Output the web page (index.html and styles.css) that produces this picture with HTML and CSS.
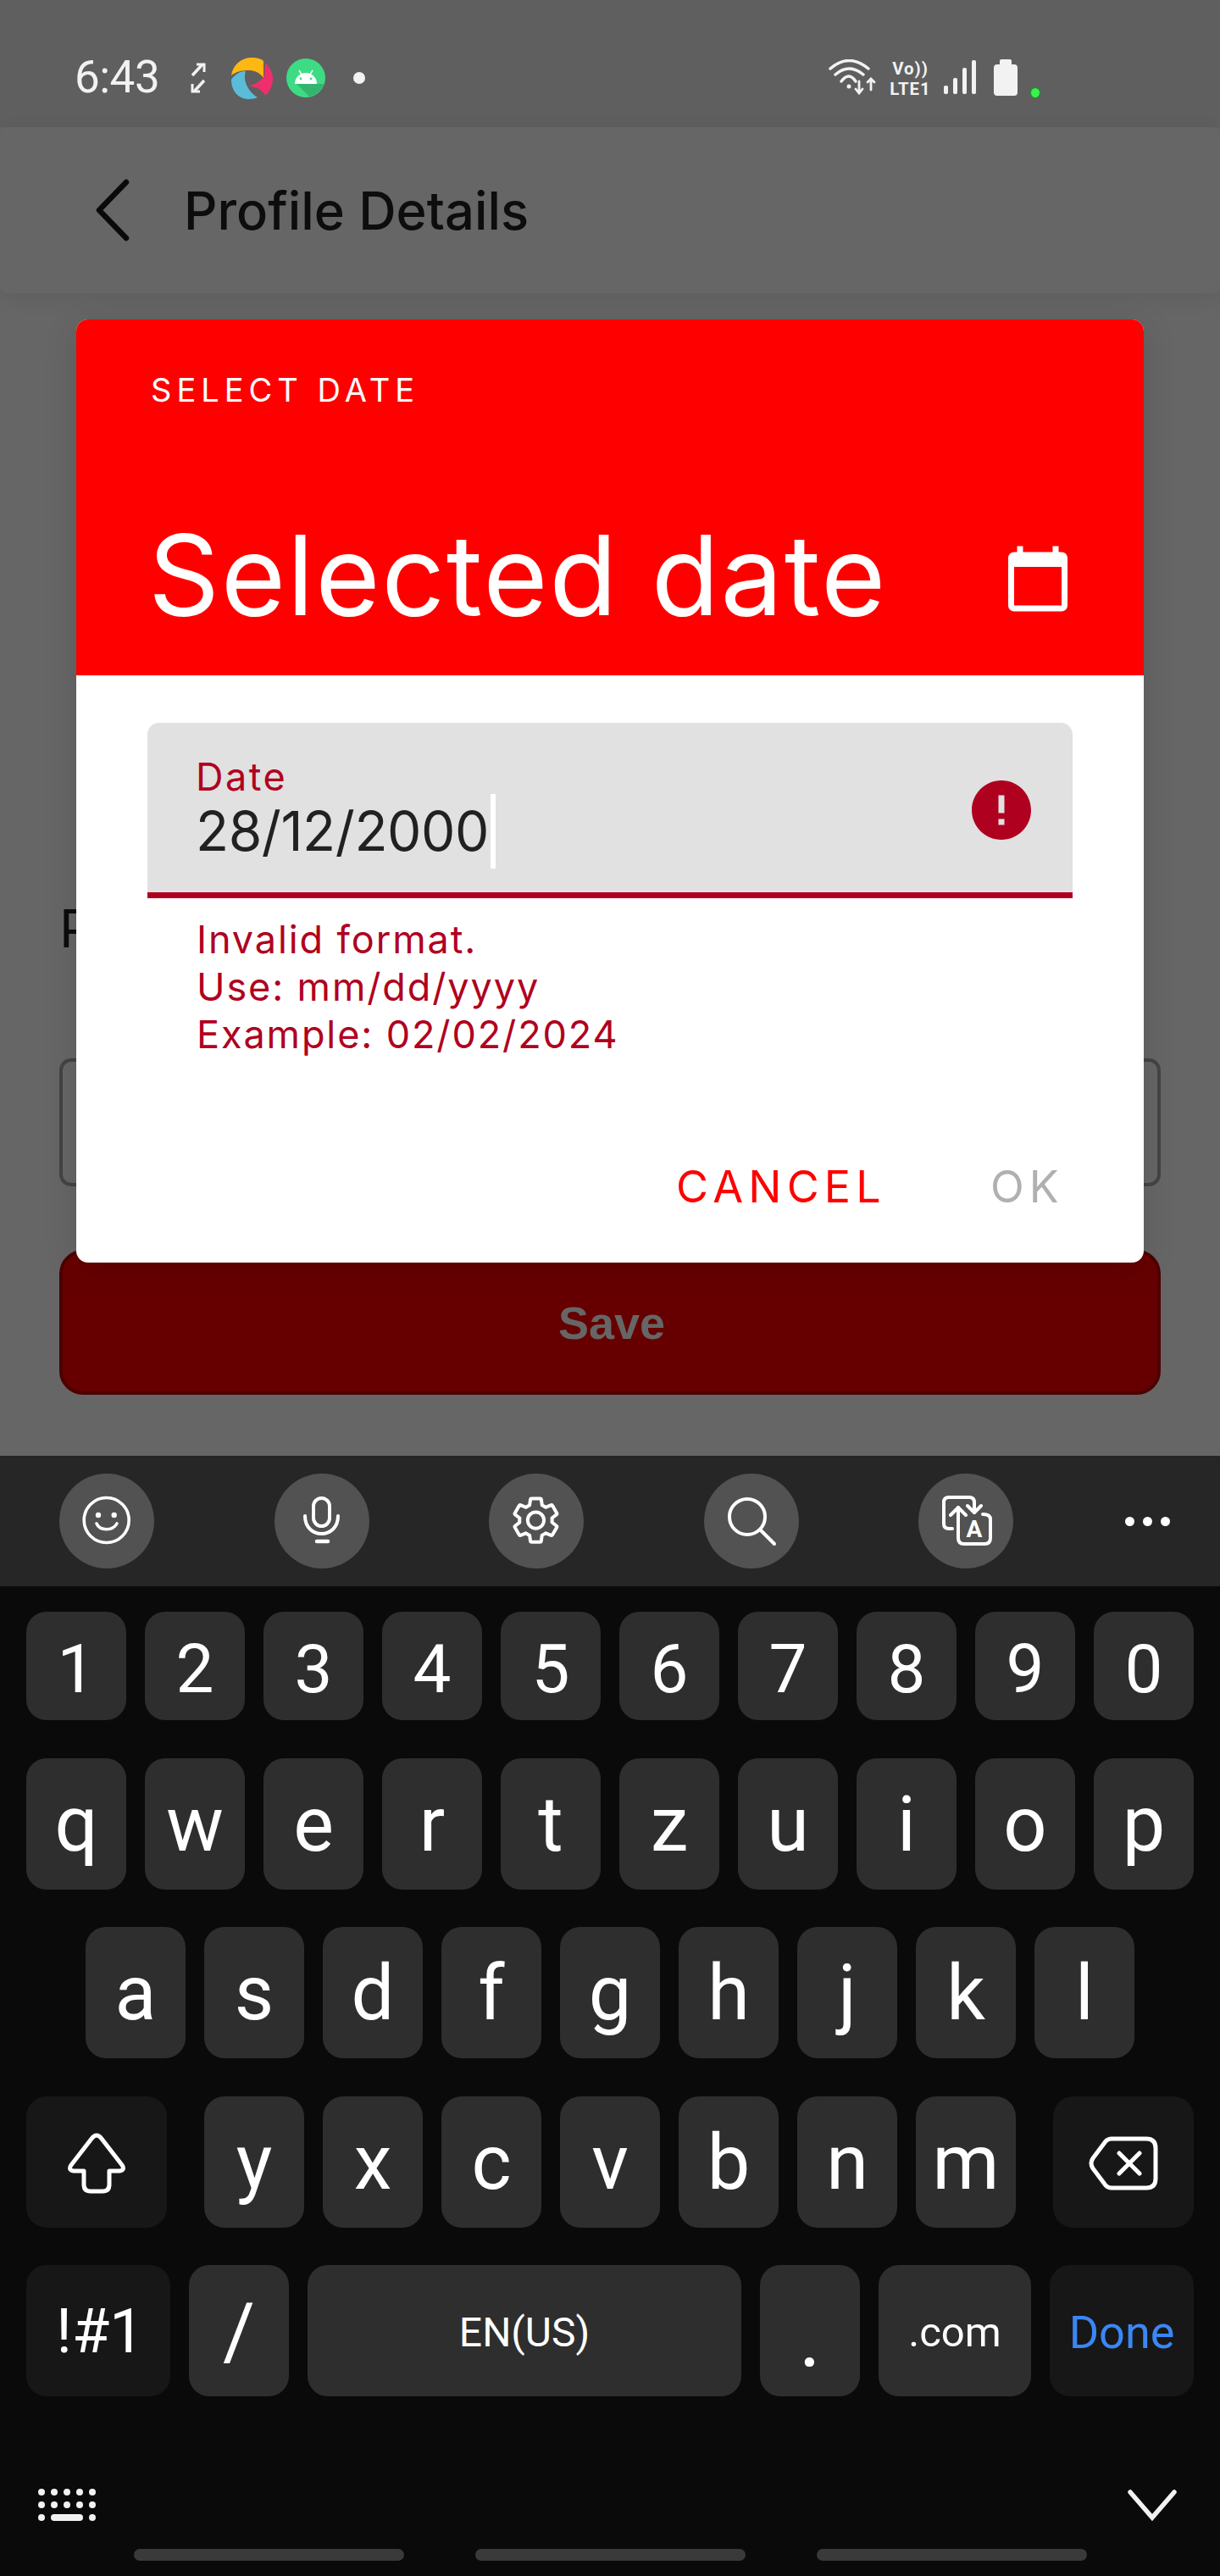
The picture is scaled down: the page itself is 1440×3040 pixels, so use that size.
FILE: index.html
```html
<!DOCTYPE html>
<html lang="en">

<head>
    <meta charset="UTF-8">
    <meta name="viewport" content="width=device-width, initial-scale=1.0">
    <title>Profile Details</title>
    <link rel="stylesheet" href="styles.css">
</head>

<body>

    <div class="app">
        <div class="status-bar">
            <span class="time">6:43</span>
            <svg class="sync-icon" width="18" height="36" viewBox="0 0 18 36" fill="none" stroke="#f2f2f2">
                <path d="M2 15 L14 2" stroke-width="3.5" />
                <path d="M7 2 H16 V11" stroke-width="3" />
                <path d="M16 21 L4 34" stroke-width="3.5" />
                <path d="M11 34 H2 V25" stroke-width="3" />
            </svg>
            <svg class="swirl-icon" width="49" height="49" viewBox="0 0 49 49">
                <path d="M0 21 C2 8 12 0 24 0 C30 0 35 1 38 4 L38 24 C33 17 27 15 20 15 C12 15 5 17 0 21Z" fill="#fdb813" />
                <path d="M40 6 C46 12 49 18 49 25 C49 33 45 41 40 45 C38 39 31 35 20 33 C29 32 35 27 39 22Z" fill="#ef2f6c" />
                <path d="M0 26 C4 20 10 16 17 16 C14 24 17 38 31 47 C28 48 25 49 21 49 C8 49 0 39 0 26Z" fill="#5bbcd8" />
            </svg>
            <svg class="android-icon" width="46" height="46" viewBox="0 0 46 46">
                <circle cx="23" cy="23" r="23" fill="#3ddc84" />
                <path d="M12 30 L27 45 A23 23 0 0 0 45 30Z" fill="#34b56f" />
                <path d="M10 30 A13 13 0 0 1 36 30Z" fill="#fff" />
                <path d="M15 14 L18 19 M31 14 L28 19" stroke="#fff" stroke-width="1.5" />
                <circle cx="17" cy="24" r="1.4" fill="#3ddc84" />
                <circle cx="29" cy="24" r="1.4" fill="#3ddc84" />
            </svg>
            <span class="notif-dot"></span>

            <div class="status-right">
                <svg class="wifi-icon" width="56" height="42" viewBox="0 0 56 42" fill="none" stroke="#f2f2f2" stroke-linecap="round">
                    <path d="M2 11 Q24 -8 47 11" stroke-width="3.5" />
                    <path d="M8 18 Q24 4 41 18" stroke-width="3.5" />
                    <path d="M15 26 Q24 14 32 26" stroke-width="3.5" />
                    <circle cx="24" cy="32" r="2.5" fill="#f2f2f2" stroke="none" />
                    <path d="M36 26 V40 M32 35 L36 40 L40 35" stroke-width="2.8" />
                    <path d="M50 36 V23 M46 27 L50 23 L54 27" stroke-width="2.8" />
                </svg>
                <div class="volte">Vo))<br>LTE1</div>
                <div class="signal">
                    <span class="bar bar-1"></span>
                    <span class="bar bar-2"></span>
                    <span class="bar bar-3"></span>
                    <span class="bar bar-4"></span>
                </div>
                <div class="battery"><span class="battery-cap"></span><span class="battery-body"></span></div>
                <span class="green-dot"></span>
            </div>
        </div>

        <div class="app-bar">
            <svg class="back-icon" width="44" height="74" viewBox="0 0 44 74" fill="none" stroke="#0a0a0a" stroke-width="6.5" stroke-linecap="round" stroke-linejoin="round">
                <path d="M38 4 L6 37 L38 70" />
            </svg>
            <h1>Profile Details</h1>
        </div>

        <div class="form">
            <div class="form-label">P</div>
            <div class="form-input"></div>
            <button class="save-btn" type="button">Save</button>
        </div>

        <div class="dialog">
            <div class="dialog-head">
                <div class="dialog-over">SELECT DATE</div>
                <div class="dialog-title-row">
                    <span class="dialog-title">Selected date</span>
                    <svg class="calendar-icon" width="84" height="84" viewBox="0 0 24 24" fill="#fff">
                        <path d="M20 3h-1V1h-2v2H7V1H5v2H4c-1.1 0-2 .9-2 2v16c0 1.1.9 2 2 2h16c1.1 0 2-.9 2-2V5c0-1.1-.9-2-2-2zm0 18H4V8h16v13z" />
                    </svg>
                </div>
            </div>

            <div class="dialog-body">
                <div class="date-field">
                    <div class="date-text">
                        <label class="date-label">Date</label>
                        <div class="date-value">28/12/2000<span class="caret"></span></div>
                    </div>
                    <svg class="error-icon" width="84" height="84" viewBox="0 0 24 24" fill="#b00020">
                        <path d="M12 2C6.48 2 2 6.48 2 12s4.48 10 10 10 10-4.48 10-10S17.52 2 12 2zm1 15h-2v-2h2v2zm0-4h-2V7h2v6z" />
                    </svg>
                </div>
                <div class="date-error">Invalid format.<br>Use: mm/dd/yyyy<br>Example: 02/02/2024</div>
            </div>

            <div class="dialog-actions">
                <span class="action action-cancel">CANCEL</span>
                <span class="action action-ok">OK</span>
            </div>
        </div>
    </div>

    <div class="keyboard">
        <div class="toolbar">
            <div class="tool">
                <svg width="112" height="112" viewBox="0 0 112 112" fill="none" stroke="#fff" stroke-width="3.6" stroke-linecap="round">
                    <circle cx="55.7" cy="55" r="26.5" />
                    <circle cx="46" cy="49" r="3.2" fill="#fff" stroke="none" />
                    <circle cx="64.7" cy="49" r="3.2" fill="#fff" stroke="none" />
                    <path d="M44 59 C48 68 63 68 68 59" />
                </svg>
            </div>
            <div class="tool">
                <svg width="112" height="112" viewBox="0 0 112 112" fill="none" stroke="#fff" stroke-width="4" stroke-linecap="round">
                    <rect x="46" y="29" width="19" height="33" rx="9.5" />
                    <path d="M36 50 C36 78 75 78 75 50" />
                    <path d="M50 80 H63" stroke-width="4.5" />
                </svg>
            </div>
            <div class="tool">
                <svg width="112" height="112" viewBox="0 0 112 112" fill="none" stroke="#fff" stroke-width="1.5" stroke-linejoin="round">
                    <g transform="translate(23.4 23) scale(2.67)">
                        <path d="M19.14 12.94c.04-.3.06-.61.06-.94 0-.32-.02-.64-.07-.94l2.03-1.58c.18-.14.23-.41.12-.61l-1.92-3.32c-.12-.22-.37-.29-.59-.22l-2.39.96c-.5-.38-1.03-.7-1.62-.94l-.36-2.54c-.04-.24-.24-.41-.48-.41h-3.84c-.24 0-.43.17-.47.41l-.36 2.54c-.59.24-1.13.57-1.62.94l-2.39-.96c-.22-.08-.47 0-.59.22L2.74 8.87c-.12.21-.08.47.12.61l2.03 1.58c-.05.3-.09.63-.09.94s.02.64.07.94l-2.03 1.58c-.18.14-.23.41-.12.61l1.92 3.32c.12.22.37.29.59.22l2.39-.96c.5.38 1.03.7 1.62.94l.36 2.54c.05.24.24.41.48.41h3.84c.24 0 .44-.17.47-.41l.36-2.54c.59-.24 1.13-.56 1.62-.94l2.39.96c.22.08.47 0 .59-.22l1.92-3.32c.12-.22.07-.47-.12-.61l-2.01-1.58zM12 15.6c-1.98 0-3.6-1.62-3.6-3.6s1.62-3.6 3.6-3.6 3.6 1.62 3.6 3.6-1.62 3.6-3.6 3.6z" />
                    </g>
                </svg>
            </div>
            <div class="tool">
                <svg width="112" height="112" viewBox="0 0 112 112" fill="none" stroke="#fff" stroke-width="4" stroke-linecap="round">
                    <circle cx="51" cy="51" r="21" />
                    <path d="M66 66 L83 83" />
                </svg>
            </div>
            <div class="tool">
                <svg width="112" height="112" viewBox="0 0 112 112" fill="none" stroke="#fff" stroke-width="4" stroke-linecap="round" stroke-linejoin="round">
                    <g transform="translate(28 26)">
                        <path d="M12 39 H8 Q2 39 2 33 V8 Q2 2 8 2 H32 Q38 2 38 8 V20" />
                        <path d="M30 12 L38 20 L46 12" />
                        <path d="M10 23 L19 14 L28 23" />
                        <path d="M19 14 V50 Q19 57 26 57 H50 Q57 57 57 50 V28 Q57 22 48 22" />
                        <text x="38" y="49" class="translate-a">A</text>
                    </g>
                </svg>
            </div>
            <div class="more-dots"><span></span><span></span><span></span></div>
        </div>

        <div class="keys">
            <div class="row row-num">
                <div class="key">1</div>
                <div class="key">2</div>
                <div class="key">3</div>
                <div class="key">4</div>
                <div class="key">5</div>
                <div class="key">6</div>
                <div class="key">7</div>
                <div class="key">8</div>
                <div class="key">9</div>
                <div class="key">0</div>
            </div>
            <div class="row row-45">
                <div class="key">q</div>
                <div class="key">w</div>
                <div class="key">e</div>
                <div class="key">r</div>
                <div class="key">t</div>
                <div class="key">z</div>
                <div class="key">u</div>
                <div class="key">i</div>
                <div class="key">o</div>
                <div class="key">p</div>
            </div>
            <div class="row">
                <div class="key">a</div>
                <div class="key">s</div>
                <div class="key">d</div>
                <div class="key">f</div>
                <div class="key">g</div>
                <div class="key">h</div>
                <div class="key">j</div>
                <div class="key">k</div>
                <div class="key">l</div>
            </div>
            <div class="row row-45">
                <div class="key key-fn key-shift">
                    <svg width="70" height="72" viewBox="0 0 70 72" fill="none" stroke="#fff" stroke-width="5" stroke-linejoin="round">
                        <path d="M35 3 Q32 3 29 7 L5 38 Q1 44 8 45 H20 V61 Q20 69 28 69 H42 Q50 69 50 61 V45 H62 Q69 44 65 38 L41 7 Q38 3 35 3Z" />
                    </svg>
                </div>
                <div class="key">y</div>
                <div class="key">x</div>
                <div class="key">c</div>
                <div class="key">v</div>
                <div class="key">b</div>
                <div class="key">n</div>
                <div class="key">m</div>
                <div class="key key-fn key-back">
                    <svg width="82" height="64" viewBox="0 0 82 64" fill="none" stroke="#fff" stroke-width="5" stroke-linecap="round" stroke-linejoin="round">
                        <path d="M27 3 H68 Q79 3 79 14 V50 Q79 61 68 61 H27 Q23 61 20 58 L5 38 Q1 32 5 26 L20 6 Q23 3 27 3Z" />
                        <path d="M36 20 L60 44 M60 20 L36 44" />
                    </svg>
                </div>
            </div>
            <div class="row">
                <div class="key key-fn key-sym">!#1</div>
                <div class="key key-slash">/</div>
                <div class="key key-space">EN(US)</div>
                <div class="key key-dot">.</div>
                <div class="key key-com">.com</div>
                <div class="key key-fn key-done">Done</div>
            </div>
        </div>

        <div class="kb-footer">
            <div class="kb-grid">
                <span></span><span></span><span></span><span></span><span></span>
                <span></span><span></span><span></span><span></span><span></span>
                <span></span><span class="kb-space"></span><span></span>
            </div>
            <svg width="62" height="40" viewBox="0 0 62 40" fill="none" stroke="#f2f2f2" stroke-width="5.5" stroke-linecap="round">
                <path d="M5 5 L31 35 L57 5" />
            </svg>
        </div>

        <div class="home-bars"><span></span><span></span><span></span></div>
    </div>

</body>

</html>
```

FILE: styles.css
```css
body {
    margin: 0;
    width: 1440px;
    height: 3040px;
    overflow: hidden;
    background-color: #666666;
    font-family: Inter, "Liberation Sans", sans-serif;
}

.app {
    position: relative;
    height: 1718px;
    overflow: hidden;
}

/* status bar */
.status-bar {
    height: 150px;
    background-color: #5f5f5f;
    display: flex;
    align-items: center;
    padding: 32px 212px 0 88px;
    box-sizing: border-box;
    color: #f2f2f2;
}

.time {
    font-family: Roboto, sans-serif;
    font-size: 53px;
    letter-spacing: -0.5px;
    width: 137px;
}

.sync-icon {
    margin-right: 30px;
    margin-top: 2px;
}

.swirl-icon {
    margin-right: 16px;
    margin-top: 2px;
}

.android-icon {
    margin-top: 2px;
    margin-right: 33px;
}

.notif-dot {
    width: 14px;
    height: 14px;
    border-radius: 50%;
    background-color: #f2f2f2;
    margin-top: 2px;
}

.status-right {
    margin-left: auto;
    display: flex;
    align-items: center;
}

.wifi-icon {
    margin-right: 15px;
}

.volte {
    width: 51px;
    margin-top: 3px;
    margin-right: 14px;
    text-align: center;
    font-family: Roboto, sans-serif;
    font-size: 20.4px;
    line-height: 24px;
    font-weight: 700;
    letter-spacing: 1px;
}

.signal {
    display: flex;
    align-items: flex-end;
    gap: 6px;
    height: 40px;
    margin-right: 21px;
}

.bar {
    width: 5px;
    background-color: #f2f2f2;
    border-radius: 2px;
}

.bar-1 {
    height: 10px;
}

.bar-2 {
    height: 19px;
}

.bar-3 {
    height: 31px;
}

.bar-4 {
    height: 40px;
}

.battery {
    display: flex;
    flex-direction: column;
    align-items: center;
    margin-right: 15px;
}

.battery-cap {
    width: 14px;
    height: 6px;
    background-color: #f2f2f2;
    border-radius: 2px 2px 0 0;
}

.battery-body {
    width: 28px;
    height: 37px;
    background-color: #f2f2f2;
    border-radius: 4px;
}

.green-dot {
    width: 10px;
    height: 11px;
    border-radius: 50%;
    background-color: #3cf04e;
    border: 1px solid #0b9a1e;
    margin-top: 36px;
}

/* app bar */
.app-bar {
    height: 196px;
    background-color: #666666;
    border-radius: 8px;
    box-shadow: 0px 6px 24px rgba(0, 0, 0, 0.08);
    display: flex;
    align-items: center;
    padding-left: 111px;
    position: relative;
}

.app-bar h1 {
    margin: 0 0 0 62px;
    font-size: 61.5px;
    font-weight: 500;
    color: #0d0d0d;
}

/* form behind the dialog */
.form {
    padding: 0 70px;
}

.form-label {
    margin-top: 710px;
    font-size: 62px;
    line-height: 80px;
    color: #0d0d0d;
}

.form-input {
    margin-top: 113px;
    height: 143px;
    border: 4px solid #444444;
    border-radius: 14px;
}

.save-btn {
    display: block;
    width: 100%;
    height: 171px;
    margin-top: 75px;
    padding-left: 10px;
    background-color: #660000;
    border: 4px solid #4d0000;
    border-radius: 28px;
    font-family: "Liberation Sans", sans-serif;
    font-size: 54px;
    font-weight: bold;
    color: #666666;
}

/* date dialog */
.dialog {
    position: absolute;
    left: 90px;
    top: 377px;
    width: 1260px;
    height: 1113px;
    background-color: #ffffff;
    border-radius: 14px;
    box-shadow: 0px 8px 40px rgba(0, 0, 0, 0.12);
    overflow: hidden;
}

.dialog-head {
    height: 420px;
    background-color: #ff0000;
    color: #ffffff;
    padding-left: 85px;
    padding-right: 83px;
    box-sizing: border-box;
}

.dialog-over {
    padding: 62px 0 0 3px;
    font-size: 38px;
    line-height: 42px;
    letter-spacing: 6px;
}

.dialog-title-row {
    display: flex;
    align-items: center;
    justify-content: space-between;
    margin-top: 123px;
}

.dialog-title {
    font-size: 131px;
    line-height: 150px;
    letter-spacing: 1.7px;
    margin-bottom: 7px;
}

.dialog-body {
    padding: 56px 84px 0;
}

.date-field {
    height: 200px;
    background-color: #e1e1e1;
    border-bottom: 7px solid #b00020;
    border-radius: 14px 14px 0 0;
    display: flex;
    align-items: center;
    justify-content: space-between;
    padding-left: 57px;
    padding-right: 42px;
}

.date-text {
    padding-top: 11px;
}

.date-label {
    display: block;
    font-size: 45px;
    line-height: 50px;
    color: #b00020;
    letter-spacing: 2.5px;
    margin-bottom: -5px;
}

.date-value {
    font-size: 64px;
    line-height: 64px;
    letter-spacing: -0.4px;
    color: #212121;
    display: flex;
    align-items: center;
}

.caret {
    width: 6px;
    height: 88px;
    background-color: #ffffff;
    margin-left: 2px;
}

.error-icon {
    margin-top: 5px;
}

.date-error {
    padding: 21px 0 0 58px;
    font-size: 45px;
    line-height: 56px;
    color: #b00020;
    letter-spacing: 1.9px;
}

.dialog-actions {
    display: flex;
    justify-content: flex-end;
    gap: 123px;
    padding: 122px 94px 0 0;
}

.action {
    font-size: 52px;
    line-height: 60px;
    letter-spacing: 6.2px;
}

.action-cancel {
    color: #ff0000;
}

.action-ok {
    color: #b0b0b0;
}

/* keyboard */
.keyboard {
    height: 1322px;
    background-color: #0a0a0a;
    color: #ffffff;
    font-family: Roboto, sans-serif;
}

.toolbar {
    height: 154px;
    background-color: #262626;
    display: flex;
    align-items: center;
    padding-left: 70px;
    gap: 141.5px;
}

.tool {
    width: 112px;
    height: 112px;
    border-radius: 50%;
    background-color: #525252;
}

.tool svg {
    display: block;
}

.translate-a {
    font-family: Roboto, sans-serif;
    font-size: 28px;
    font-weight: 700;
    fill: #ffffff;
    stroke: none;
    text-anchor: middle;
}

.more-dots {
    margin-left: -10px;
    display: flex;
    gap: 10px;
}

.more-dots span {
    width: 11px;
    height: 11px;
    border-radius: 50%;
    background-color: #ffffff;
}

.keys {
    padding: 30px 31px 0;
}

.row {
    display: flex;
    justify-content: center;
    gap: 22px;
    height: 155px;
    margin-top: 44px;
}

.row-num {
    height: 128px;
    margin-top: 0;
}

.row-45 {
    margin-top: 45px;
}

.key {
    width: 118px;
    box-sizing: border-box;
    padding-top: 2px;
    background-color: #2e2e2e;
    border-radius: 24px;
    display: flex;
    align-items: center;
    justify-content: center;
    font-size: 90px;
}

.row-num .key {
    font-size: 80px;
    padding-top: 8px;
}

.key-fn {
    background-color: #171717;
}

.key-shift {
    width: 166px;
    margin-right: 22px;
}

.key-back {
    width: 166px;
    margin-left: 22px;
}

.key-sym {
    width: 170px;
    font-size: 72px;
    padding-left: 4px;
}

.key-slash {
    font-size: 92px;
}

.key-space {
    width: 512px;
    font-size: 48px;
    padding-top: 4px;
}

.key-dot {
    font-size: 100px;
    padding-top: 13px;
}

.key-com {
    width: 180px;
    font-size: 49px;
    padding-top: 4px;
}

.key-done {
    width: 170px;
    font-size: 54px;
    padding-top: 4px;
    color: #3a87f5;
}

.kb-footer {
    display: flex;
    align-items: center;
    justify-content: space-between;
    padding: 108px 49px 0 45px;
}

.kb-grid {
    display: grid;
    grid-template-columns: repeat(5, 8px);
    column-gap: 7px;
    row-gap: 7px;
}

.kb-grid span {
    height: 8px;
    border-radius: 4px;
    background-color: #f2f2f2;
}

.kb-grid .kb-space {
    grid-column: span 3;
}

.home-bars {
    display: flex;
    justify-content: center;
    gap: 84px;
    margin-top: 32px;
}

.home-bars span {
    width: 319px;
    height: 14px;
    border-radius: 7px;
    background-color: #3a3a3a;
}
```
